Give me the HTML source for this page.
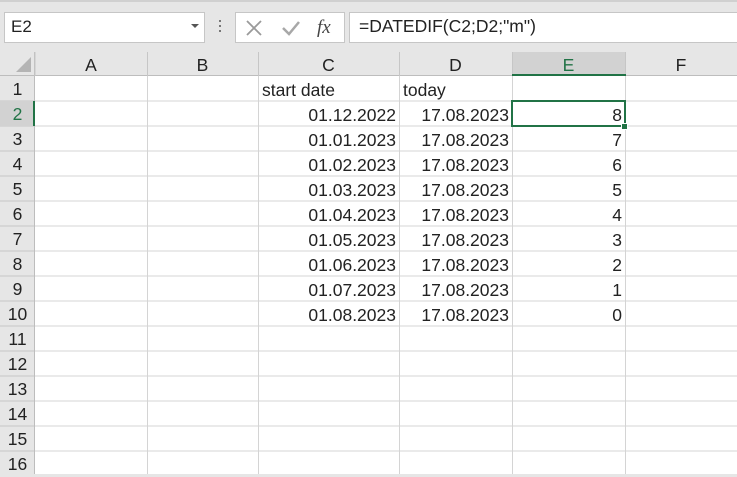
<!DOCTYPE html>
<html><head><style>
body{margin:0;width:737px;height:474px;overflow:hidden;background:#e6e6e6;font-family:"Liberation Sans",Arial,sans-serif;position:relative}
.a{position:absolute}
.top{left:0;top:0;width:737px;height:52px;background:#e6e6e6}
.c{position:absolute;font-size:17.5px;color:#222;line-height:26px;height:25px;box-sizing:border-box}
.r{text-align:right;padding-right:3px}
</style></head><body>
<div class="a top"></div>
<div class="a" style="left:0;top:0;width:737px;height:2px;background:#d0d0d0"></div>
<div class="a" style="left:4px;top:12px;width:199px;height:29px;background:#fff;border:1px solid #c6c6c6"></div>
<div class="a" style="left:11px;top:17px;font-size:17px;color:#222">E2</div>
<div class="a" style="left:191px;top:24px;width:0;height:0;border-left:4px solid transparent;border-right:4px solid transparent;border-top:4px solid #555"></div>
<div class="a" style="left:219px;top:20px;width:2px;height:2px;background:#777;box-shadow:0 5px 0 #777,0 10px 0 #777"></div>
<div class="a" style="left:235px;top:12px;width:108px;height:29px;background:#fff;border:1px solid #c6c6c6"></div>
<svg class="a" style="left:245px;top:18px" width="90" height="20"><path d="M2 3L16 17M16 3L2 17" stroke="#9a9a9a" stroke-width="1.8" fill="none"/><path d="M38 10L44 16L54 4" stroke="#a8a8a8" stroke-width="2.5" fill="none"/><text x="72" y="15" font-family="Liberation Serif" font-style="italic" font-size="19" fill="#444">fx</text></svg>
<div class="a" style="left:349px;top:12px;width:390px;height:29px;background:#fff;border:1px solid #c6c6c6"></div>
<div class="a" style="left:359px;top:16px;font-size:17.5px;color:#222">=DATEDIF(C2;D2;"m")</div>
<div class="a" style="left:35px;top:76px;width:702px;height:398px;background:#fff"></div>
<svg class="a" style="left:0;top:52px" width="737" height="422">
<g stroke="#d4d4d4" stroke-width="1">
<line x1="147.5" y1="24" x2="147.5" y2="422"/><line x1="258.5" y1="24" x2="258.5" y2="422"/><line x1="399.5" y1="24" x2="399.5" y2="422"/><line x1="512.5" y1="24" x2="512.5" y2="422"/><line x1="625.5" y1="24" x2="625.5" y2="422"/>
</g>
<path d="M35 49H737M35 74H737M35 99H737M35 124H737M35 149H737M35 174H737M35 199H737M35 224H737M35 249H737M35 274H737M35 299H737M35 324H737M35 349H737M35 374H737M35 399H737" stroke="#d4d4d4"/>
<path d="M0 49H35M0 74H35M0 99H35M0 124H35M0 149H35M0 174H35M0 199H35M0 224H35M0 249H35M0 274H35M0 299H35M0 324H35M0 349H35M0 374H35M0 399H35" stroke="#c6c6c6"/>
<line x1="0" y1="23.5" x2="737" y2="23.5" stroke="#bdbdbd"/>
<line x1="34.5" y1="0" x2="34.5" y2="422" stroke="#bdbdbd"/>
<path d="M35 0V24M147.5 0V24M258.5 0V24M399.5 0V24M512.5 0V24M625.5 0V24" stroke="#c6c6c6"/>
<rect x="513" y="0" width="112" height="23" fill="#d2d2d2"/>
<rect x="512" y="22" width="114" height="2" fill="#217346"/>
<rect x="0" y="49" width="34" height="25" fill="#d2d2d2"/>
<rect x="33" y="49" width="2" height="25" fill="#217346"/>
<path d="M31 5V20H16Z" fill="#b4b4b4"/>
</svg>
<div class="c" style="left:35px;top:52px;width:112px;text-align:center">A</div>
<div class="c" style="left:147px;top:52px;width:111px;text-align:center">B</div>
<div class="c" style="left:258px;top:52px;width:141px;text-align:center">C</div>
<div class="c" style="left:399px;top:52px;width:113px;text-align:center">D</div>
<div class="c" style="left:512px;top:52px;width:113px;text-align:center;color:#217346">E</div>
<div class="c" style="left:625px;top:52px;width:112px;text-align:center">F</div>
<div class="a" style="left:0;top:76px;width:35px">
<div class="c" style="position:static;text-align:center">1</div><div class="c" style="position:static;text-align:center;color:#217346">2</div><div class="c" style="position:static;text-align:center">3</div><div class="c" style="position:static;text-align:center">4</div><div class="c" style="position:static;text-align:center">5</div><div class="c" style="position:static;text-align:center">6</div><div class="c" style="position:static;text-align:center">7</div><div class="c" style="position:static;text-align:center">8</div><div class="c" style="position:static;text-align:center">9</div><div class="c" style="position:static;text-align:center">10</div><div class="c" style="position:static;text-align:center">11</div><div class="c" style="position:static;text-align:center">12</div><div class="c" style="position:static;text-align:center">13</div><div class="c" style="position:static;text-align:center">14</div><div class="c" style="position:static;text-align:center">15</div><div class="c" style="position:static;text-align:center">16</div>
</div>
<div class="c" style="left:262px;top:77px">start date</div>
<div class="c" style="left:403px;top:77px">today</div>
<div class="a" style="left:258px;top:102px;width:141px">
<div class="c r" style="position:static">01.12.2022</div><div class="c r" style="position:static">01.01.2023</div><div class="c r" style="position:static">01.02.2023</div><div class="c r" style="position:static">01.03.2023</div><div class="c r" style="position:static">01.04.2023</div><div class="c r" style="position:static">01.05.2023</div><div class="c r" style="position:static">01.06.2023</div><div class="c r" style="position:static">01.07.2023</div><div class="c r" style="position:static">01.08.2023</div>
</div>
<div class="a" style="left:399px;top:102px;width:113px">
<div class="c r" style="position:static">17.08.2023</div><div class="c r" style="position:static">17.08.2023</div><div class="c r" style="position:static">17.08.2023</div><div class="c r" style="position:static">17.08.2023</div><div class="c r" style="position:static">17.08.2023</div><div class="c r" style="position:static">17.08.2023</div><div class="c r" style="position:static">17.08.2023</div><div class="c r" style="position:static">17.08.2023</div><div class="c r" style="position:static">17.08.2023</div>
</div>
<div class="a" style="left:512px;top:102px;width:113px">
<div class="c r" style="position:static">8</div><div class="c r" style="position:static">7</div><div class="c r" style="position:static">6</div><div class="c r" style="position:static">5</div><div class="c r" style="position:static">4</div><div class="c r" style="position:static">3</div><div class="c r" style="position:static">2</div><div class="c r" style="position:static">1</div><div class="c r" style="position:static">0</div>
</div>
<div class="a" style="left:511px;top:100px;width:111px;height:23px;border:2px solid #217346"></div>
<div class="a" style="left:621px;top:123px;width:5px;height:5px;background:#217346;border:1px solid #fff"></div>
</body></html>
